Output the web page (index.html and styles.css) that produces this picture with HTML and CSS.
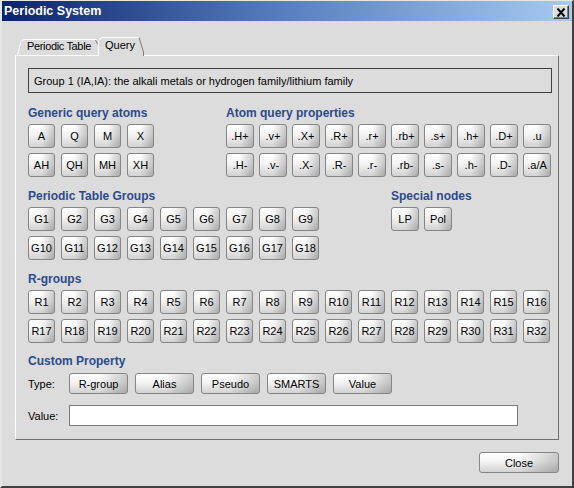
FILE: index.html
```html
<!DOCTYPE html>
<html>
<head>
<meta charset="utf-8">
<title>Periodic System</title>
<link rel="stylesheet" href="styles.css">
</head>
<body>
<div class="window">
  <div class="titlebar">
    <span class="title">Periodic System</span>
    <div class="xbtn"><svg width="10" height="9" viewBox="0 0 10 9"><path d="M1.5 0.5 L8.5 8.5 M8.5 0.5 L1.5 8.5" stroke="#000" stroke-width="2" fill="none"/></svg></div>
  </div>
  <div class="client">
    <div class="tabs">
      <div class="tab tab-pt">
        <svg class="tabshape" width="81" height="16" viewBox="0 0 81 16"><path d="M0 16 L3 3 Q4 0 7 0 L81 0 L81 16 Z" fill="#dcdcdc"/><path d="M0.5 16 L3.5 3.5 Q4.5 0.5 7.5 0.5 L80 0.5" stroke="#fff" fill="none"/><path d="M78.5 1 L80.5 5" stroke="#808080" fill="none"/></svg>
        <span class="tablabel tl-pt">Periodic Table</span>
      </div>
      <div class="tab tab-q">
        <svg class="tabshape" width="47" height="19" viewBox="0 0 47 19"><path d="M0 19 L0 4 Q1 0 5 0 L41 0 L46 15 L46 19 Z" fill="#dcdcdc"/><path d="M0.5 19 L0.5 4 Q1.5 0.5 5 0.5 L41 0.5" stroke="#fff" fill="none"/><path d="M41 0.5 L45.5 15 L45.5 19" stroke="#7a7a7a" fill="none"/></svg>
        <span class="tablabel">Query</span>
      </div>
    </div>
    <div class="panel">
      <div class="info">Group 1 (IA,IA): the alkali metals or hydrogen family/lithium family</div>

      <div class="qrow first">
        <div class="sec sec-narrow">
          <div class="h">Generic query atoms</div>
          <div class="grid c4">
            <button class="btn">A</button><button class="btn">Q</button><button class="btn">M</button><button class="btn">X</button>
            <button class="btn">AH</button><button class="btn">QH</button><button class="btn">MH</button><button class="btn">XH</button>
          </div>
        </div>
        <div class="sec">
          <div class="h">Atom query properties</div>
          <div class="grid c10 wide">
            <button class="btn">.H+</button><button class="btn">.v+</button><button class="btn">.X+</button><button class="btn">.R+</button><button class="btn">.r+</button><button class="btn">.rb+</button><button class="btn">.s+</button><button class="btn">.h+</button><button class="btn">.D+</button><button class="btn">.u</button>
            <button class="btn">.H-</button><button class="btn">.v-</button><button class="btn">.X-</button><button class="btn">.R-</button><button class="btn">.r-</button><button class="btn">.rb-</button><button class="btn">.s-</button><button class="btn">.h-</button><button class="btn">.D-</button><button class="btn">.a/A</button>
          </div>
        </div>
      </div>

      <div class="qrow">
        <div class="sec sec-groups">
          <div class="h">Periodic Table Groups</div>
          <div class="grid c9">
            <button class="btn">G1</button><button class="btn">G2</button><button class="btn">G3</button><button class="btn">G4</button><button class="btn">G5</button><button class="btn">G6</button><button class="btn">G7</button><button class="btn">G8</button><button class="btn">G9</button>
            <button class="btn">G10</button><button class="btn">G11</button><button class="btn">G12</button><button class="btn">G13</button><button class="btn">G14</button><button class="btn">G15</button><button class="btn">G16</button><button class="btn">G17</button><button class="btn">G18</button>
          </div>
        </div>
        <div class="sec">
          <div class="h">Special nodes</div>
          <div class="grid c2 wide">
            <button class="btn">LP</button><button class="btn">Pol</button>
          </div>
        </div>
      </div>

      <div class="qrow">
        <div class="sec">
          <div class="h">R-groups</div>
          <div class="grid c16">
            <button class="btn">R1</button><button class="btn">R2</button><button class="btn">R3</button><button class="btn">R4</button><button class="btn">R5</button><button class="btn">R6</button><button class="btn">R7</button><button class="btn">R8</button><button class="btn">R9</button><button class="btn">R10</button><button class="btn">R11</button><button class="btn">R12</button><button class="btn">R13</button><button class="btn">R14</button><button class="btn">R15</button><button class="btn">R16</button>
            <button class="btn">R17</button><button class="btn">R18</button><button class="btn">R19</button><button class="btn">R20</button><button class="btn">R21</button><button class="btn">R22</button><button class="btn">R23</button><button class="btn">R24</button><button class="btn">R25</button><button class="btn">R26</button><button class="btn">R27</button><button class="btn">R28</button><button class="btn">R29</button><button class="btn">R30</button><button class="btn">R31</button><button class="btn">R32</button>
          </div>
        </div>
      </div>

      <div class="custom">
        <div class="h h-custom">Custom Property</div>
        <div class="typerow">
          <span class="lbl">Type:</span>
          <div class="typebtns">
            <button class="btn tbtn">R-group</button><button class="btn tbtn">Alias</button><button class="btn tbtn">Pseudo</button><button class="btn tbtn">SMARTS</button><button class="btn tbtn">Value</button>
          </div>
        </div>
        <div class="valrow">
          <span class="lbl">Value:</span>
          <input class="valinput" type="text">
        </div>
      </div>
    </div>
    <div class="footer">
      <button class="btn closebtn">Close</button>
    </div>
  </div>
</div>
</body>
</html>
```

FILE: styles.css
```css
* { box-sizing: border-box; }
html, body { margin: 0; padding: 0; }
body {
  width: 574px;
  height: 488px;
  overflow: hidden;
  background: #dcdcdc;
  font-family: "Liberation Sans", Arial, sans-serif;
  font-size: 11px;
  color: #000;
}
.window {
  width: 574px;
  height: 488px;
  display: flex;
  flex-direction: column;
  border-style: solid;
  border-width: 1px 2px 2px 2px;
  border-color: #e6e6e6 #404040 #404040 #e6e6e6;
  background: #dcdcdc;
}
.titlebar {
  height: 20px;
  flex: none;
  display: flex;
  align-items: center;
  justify-content: space-between;
  padding: 0 3px 0 2px;
  background: linear-gradient(to right, #0a246a 0%, #5a7fbe 50%, #a6caf0 100%);
}
.title {
  color: #fff;
  font-weight: bold;
  font-size: 12.5px;
  font-family: "Liberation Sans", Arial, sans-serif;
}
.xbtn {
  width: 16px;
  height: 14px;
  margin-top: 2px;
  display: flex;
  align-items: center;
  justify-content: center;
  background: #dcdcdc;
  border: 1px solid;
  border-color: #ffffff #404040 #404040 #ffffff;
  box-shadow: inset -1px -1px 0 #808080;
}
.xbtn svg { display: block; }
.client {
  flex: 1;
  display: flex;
  flex-direction: column;
  padding: 16px 13px 0;
}
.tabs {
  display: flex;
  align-items: flex-start;
  height: 18px;
  padding-left: 2px;
}
.tab {
  position: relative;
  z-index: 1;
}
.tabshape {
  position: absolute;
  left: 0;
  top: 0;
  display: block;
}
.tablabel {
  position: relative;
  display: block;
  line-height: 13px;
  white-space: nowrap;
}
.tl-pt { letter-spacing: -0.35px; }
.tab-pt {
  width: 81px;
  height: 16px;
  margin-top: 2px;
  padding: 1px 0 0 10px;
}
.tab-q {
  width: 47px;
  height: 19px;
  padding: 2px 0 0 7px;
  z-index: 2;
}
.panel {
  border: 1px solid;
  border-color: #ffffff #6e6e6e #6e6e6e #ffffff;
  padding: 12px 6px 13px 12px;
  display: flex;
  flex-direction: column;
}
.info {
  width: 524px;
  height: 25px;
  border: 1px solid #404040;
  padding-left: 5px;
  display: flex;
  align-items: center;
  white-space: nowrap;
}
.qrow {
  display: flex;
  margin-top: 12px;
}
.qrow.first { margin-top: 13px; }
.sec-narrow { width: 198px; flex: none; }
.sec-groups { width: 363px; flex: none; }
.h {
  font-weight: bold;
  font-size: 12px;
  line-height: 14px;
  color: #2b4a8e;
  margin-bottom: 4px;
  white-space: nowrap;
}
.grid {
  display: grid;
  row-gap: 5px;
  column-gap: 6px;
  grid-auto-rows: 24px;
}
.grid.c4 { grid-template-columns: repeat(4, 27px); }
.grid.c9 { grid-template-columns: repeat(9, 27px); }
.grid.c16 { grid-template-columns: repeat(16, 27px); }
.grid.c10 { grid-template-columns: repeat(10, 28px); column-gap: 5px; }
.grid.c2 { grid-template-columns: repeat(2, 28px); column-gap: 5px; }
.btn {
  font-family: "Liberation Sans", Arial, sans-serif;
  font-size: 11px;
  color: #000;
  margin: 0;
  padding: 0;
  border: 1px solid #858585;
  border-radius: 3px;
  background:
    linear-gradient(to right, rgba(0,0,0,0) 50%, rgba(0,0,0,0.2) 100%),
    linear-gradient(to bottom, #ffffff 0%, #f3f3f3 45%, #d2d2d2 100%);
  display: flex;
  align-items: center;
  justify-content: center;
  white-space: nowrap;
  overflow: hidden;
}
.custom {
  margin-top: 11px;
  display: flex;
  flex-direction: column;
}
.h-custom { margin-bottom: 5px; }
.typerow, .valrow {
  display: flex;
  align-items: center;
  height: 21px;
}
.valrow { margin-top: 11px; }
.lbl { width: 41px; flex: none; }
.typebtns { display: flex; gap: 7px; }
.tbtn { width: 59px; height: 21px; }
.valinput {
  width: 449px;
  height: 21px;
  margin: 0;
  border: 1px solid #7a7a7a;
  background: #fff;
  padding: 0 3px;
  font-family: "Liberation Sans", Arial, sans-serif;
  font-size: 11px;
}
.footer {
  display: flex;
  justify-content: flex-end;
  padding-top: 12px;
}
.closebtn { width: 80px; height: 21px; }
```
